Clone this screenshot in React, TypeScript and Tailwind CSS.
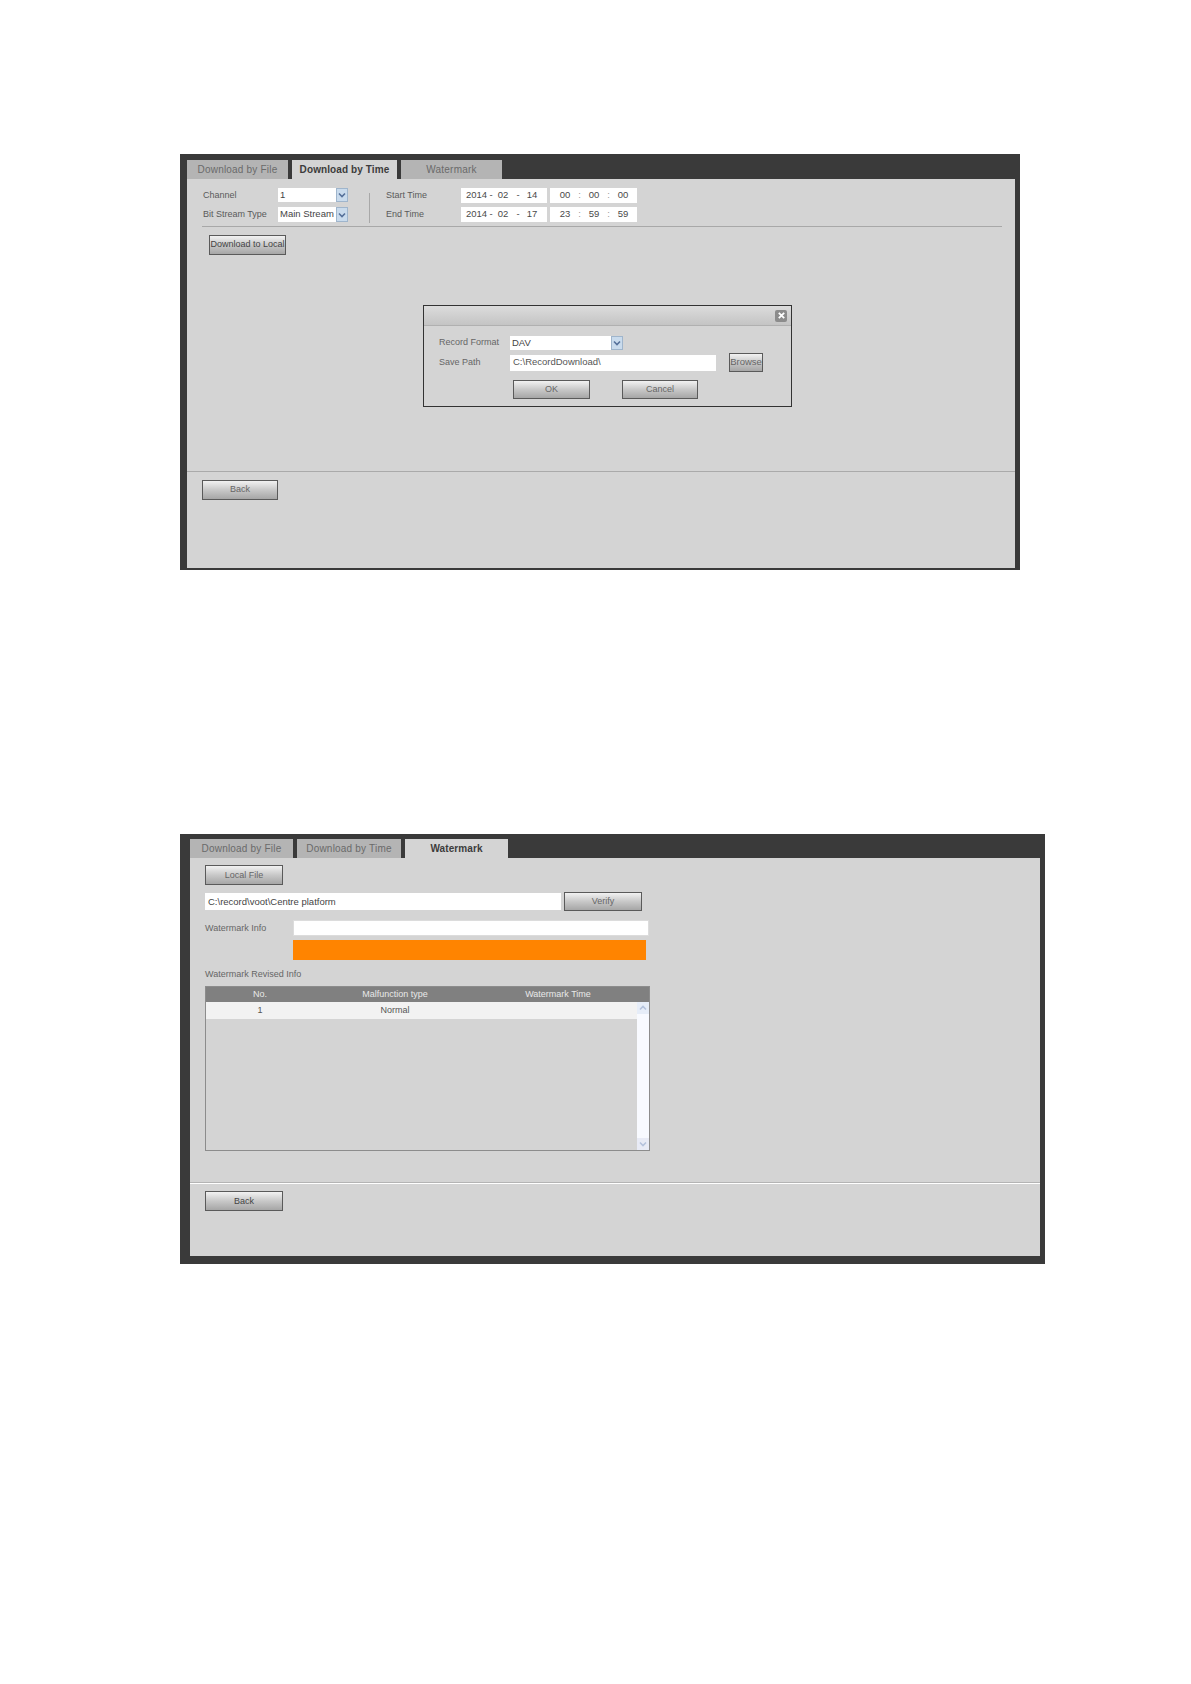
import type { ReactNode } from "react";

function Tab({ label, active, width }: { label: string; active?: boolean; width: string }) {
  return (
    <div
      className={`${width} flex items-center justify-center text-[10px] ${
        active ? "bg-[#d4d4d4] font-bold tracking-[0.1px] text-[#3c3c3c]" : "bg-[#b4b4b4] tracking-[0.2px] text-[#6a6a6a]"
      }`}
    >
      {label}
    </div>
  );
}

function GrayButton({ label, className, dark }: { label: string; className: string; dark?: boolean }) {
  return (
    <button
      className={`${className} flex shrink-0 items-center justify-center whitespace-nowrap border border-[#5a5a5a] bg-gradient-to-b from-[#f2f2f2] via-[#c8c8c8] to-[#a6a6a6] ${
        dark ? "text-[#444]" : "text-[#666]"
      }`}
    >
      {label}
    </button>
  );
}

function Arrow({ up, faint }: { up?: boolean; faint?: boolean }) {
  return (
    <svg viewBox="0 0 10 10" className="h-[10px] w-[10px]">
      <path
        d={up ? "M2 6.5 5 3.5 8 6.5" : "M2 3.5 5 6.5 8 3.5"}
        fill="none"
        stroke={faint ? "#b4c2dc" : "#55709a"}
        strokeWidth="1.6"
      />
    </svg>
  );
}

function Select({ value, className }: { value: string; className: string }) {
  return (
    <div className={`${className} flex items-center bg-white pl-[2px] text-[9.5px] text-[#444]`}>
      <span className="flex-1 whitespace-nowrap">{value}</span>
      <span className="flex h-full w-[12px] items-center justify-center border border-[#9fb5cc] bg-[#c9dbed]">
        <Arrow />
      </span>
    </div>
  );
}

function Field({ children }: { children: ReactNode }) {
  return <div className="flex h-[15px] items-center bg-white text-[9.5px] text-[#4a4a4a]">{children}</div>;
}

function DateValue({ y, m, d }: { y: string; m: string; d: string }) {
  return (
    <Field>
      <span className="ml-[5px] w-[20px]">{y}</span>
      <span className="w-[10px] text-center">-</span>
      <span className="w-[14px] text-center">{m}</span>
      <span className="w-[16px] text-center">-</span>
      <span className="w-[12px] text-center">{d}</span>
    </Field>
  );
}

function TimeValue({ h, m, s }: { h: string; m: string; s: string }) {
  return (
    <Field>
      <span className="ml-[9px] w-[12px] text-center">{h}</span>
      <span className="w-[17px] text-center text-[#999]">:</span>
      <span className="w-[12px] text-center">{m}</span>
      <span className="w-[17px] text-center text-[#999]">:</span>
      <span className="w-[12px] text-center">{s}</span>
    </Field>
  );
}

function Dialog() {
  return (
    <div className="absolute left-[236px] top-[126px] h-[102px] w-[369px] border-[1.5px] border-[#333] bg-[#d4d4d4] text-[9px]">
      <div className="flex h-[20px] items-center justify-end border-b border-[#b0b0b0] bg-gradient-to-b from-[#dcdcdc] to-[#c4c4c4] pr-[4px]">
        <span className="flex h-[12px] w-[12px] items-center justify-center rounded-[2px] bg-[#8c8c8c]">
          <svg viewBox="0 0 10 10" className="h-[9px] w-[9px]">
            <path d="M2 2 8 8M8 2 2 8" stroke="#fff" strokeWidth="2" />
          </svg>
        </span>
      </div>
      <div className="ml-[15px] mt-[10px] flex items-center text-[#666]">
        <span className="w-[71px]">Record Format</span>
        <Select value="DAV" className="h-[14px] w-[113px]" />
      </div>
      <div className="ml-[15px] mt-[3px] flex items-center text-[#666]">
        <span className="w-[71px]">Save Path</span>
        <div className="flex h-[16px] w-[206px] items-center bg-white pl-[3px] text-[9.5px] text-[#555]">C:\RecordDownload\</div>
        <GrayButton label="Browse" className="ml-[13px] h-[19px] w-[34px] text-[9.5px]" />
      </div>
      <div className="ml-[89px] mt-[8px] flex gap-[32px]">
        <GrayButton label="OK" className="h-[19px] w-[77px] pt-px" />
        <GrayButton label="Cancel" className="h-[19px] w-[76px] pt-px" />
      </div>
    </div>
  );
}

function TimePanel() {
  return (
    <div className="flex h-[416px] w-[840px] flex-col bg-[#3a3a3a] pb-[2px] pl-[7px] pr-[5px] pt-[6px]">
      <div className="flex h-[19px] gap-[4px]">
        <Tab label="Download by File" width="w-[101px]" />
        <Tab label="Download by Time" width="w-[105px]" active />
        <Tab label="Watermark" width="w-[101px]" />
      </div>
      <div className="relative flex-1 bg-[#d4d4d4] text-[9px]">
        <div className="ml-[16px] flex pt-[9px] text-[#5a5a5a]">
          <div className="grid grid-cols-[75px_70px] gap-y-[3px]">
            <span className="flex h-[15px] items-center">Channel</span>
            <Select value="1" className="h-[14px]" />
            <span className="flex h-[15px] items-center">Bit Stream Type</span>
            <Select value="Main Stream" className="h-[15px]" />
          </div>
          <div className="ml-[21px] mt-[5px] h-[30px] w-px bg-[#a8a8a8]" />
          <div className="ml-[16px] grid grid-cols-[75px_86px_90px] gap-y-[3px]">
            <span className="flex h-[15px] items-center">Start Time</span>
            <DateValue y="2014" m="02" d="14" />
            <div className="ml-[3px]">
              <TimeValue h="00" m="00" s="00" />
            </div>
            <span className="flex h-[15px] items-center">End Time</span>
            <DateValue y="2014" m="02" d="17" />
            <div className="ml-[3px]">
              <TimeValue h="23" m="59" s="59" />
            </div>
          </div>
        </div>
        <div className="ml-[15px] mt-[3px] h-px w-[800px] bg-[#a8a8a8]" />
        <GrayButton label="Download to Local" className="ml-[22px] mt-[8px] h-[20px] w-[77px]" dark />
        <div className="mt-[216px] h-px bg-[#aaaaaa]" />
        <GrayButton label="Back" className="ml-[15px] mt-[8px] h-[20px] w-[76px]" />
        <Dialog />
      </div>
    </div>
  );
}

function WatermarkTable() {
  return (
    <div className="ml-[15px] mt-[6px] flex h-[165px] w-[445px] flex-col border border-[#8c8c8c]">
      <div className="grid h-[15px] shrink-0 grid-cols-[108px_162px_164px] items-center bg-[#808080] text-center text-[#e8e8e8]">
        <span>No.</span>
        <span>Malfunction type</span>
        <span>Watermark Time</span>
      </div>
      <div className="flex flex-1">
        <div className="flex-1">
          <div className="grid h-[17px] grid-cols-[108px_162px] items-center bg-[#f2f2f2] text-center text-[#555]">
            <span>1</span>
            <span>Normal</span>
          </div>
        </div>
        <div className="flex w-[12px] flex-col items-center justify-between bg-[#f8faff]">
          <span className="flex h-[12px] w-[12px] items-center justify-center bg-[#e6edf8]">
            <Arrow up faint />
          </span>
          <span className="flex h-[12px] w-[12px] items-center justify-center bg-[#e8ebf6]">
            <Arrow faint />
          </span>
        </div>
      </div>
    </div>
  );
}

function WatermarkPanel() {
  return (
    <div className="flex h-[430px] w-[865px] flex-col bg-[#3a3a3a] pb-[8px] pl-[10px] pr-[5px] pt-[5px]">
      <div className="flex h-[19px] gap-[4px]">
        <Tab label="Download by File" width="w-[103px]" />
        <Tab label="Download by Time" width="w-[104px]" />
        <Tab label="Watermark" width="w-[103px]" active />
      </div>
      <div className="flex-1 bg-[#d4d4d4] text-[9px] text-[#666]">
        <GrayButton label="Local File" className="ml-[15px] mt-[7px] h-[20px] w-[78px] pt-px" />
        <div className="ml-[15px] mt-[7px] flex items-center">
          <div className="flex h-[17px] w-[356px] items-center bg-white pl-[3px] pt-px text-[9.5px] text-[#444]">
            C:\record\voot\Centre platform
          </div>
          <GrayButton label="Verify" className="ml-[3px] h-[19px] w-[78px] pt-px" />
        </div>
        <div className="ml-[15px] mt-[9px] flex items-center">
          <span className="w-[88px] pt-px">Watermark Info</span>
          <div className="h-[16px] w-[356px] border border-[#dcdcdc] bg-white" />
        </div>
        <div className="ml-[103px] mt-[4px] h-[20px] w-[353px] bg-[#ff8400]" />
        <div className="ml-[15px] mt-[8px] h-[12px] leading-[12px]">Watermark Revised Info</div>
        <WatermarkTable />
        <div className="mt-[31px] h-[2px] border-t border-[#b4b4b4] bg-white" />
        <GrayButton label="Back" className="ml-[15px] mt-[7px] h-[20px] w-[78px] pt-px" dark />
      </div>
    </div>
  );
}

export default function App() {
  return (
    <div className="min-h-[1684px] bg-white pl-[180px] pt-[154px] font-['Liberation_Sans',sans-serif]">
      <TimePanel />
      <div className="mt-[264px]">
        <WatermarkPanel />
      </div>
    </div>
  );
}
